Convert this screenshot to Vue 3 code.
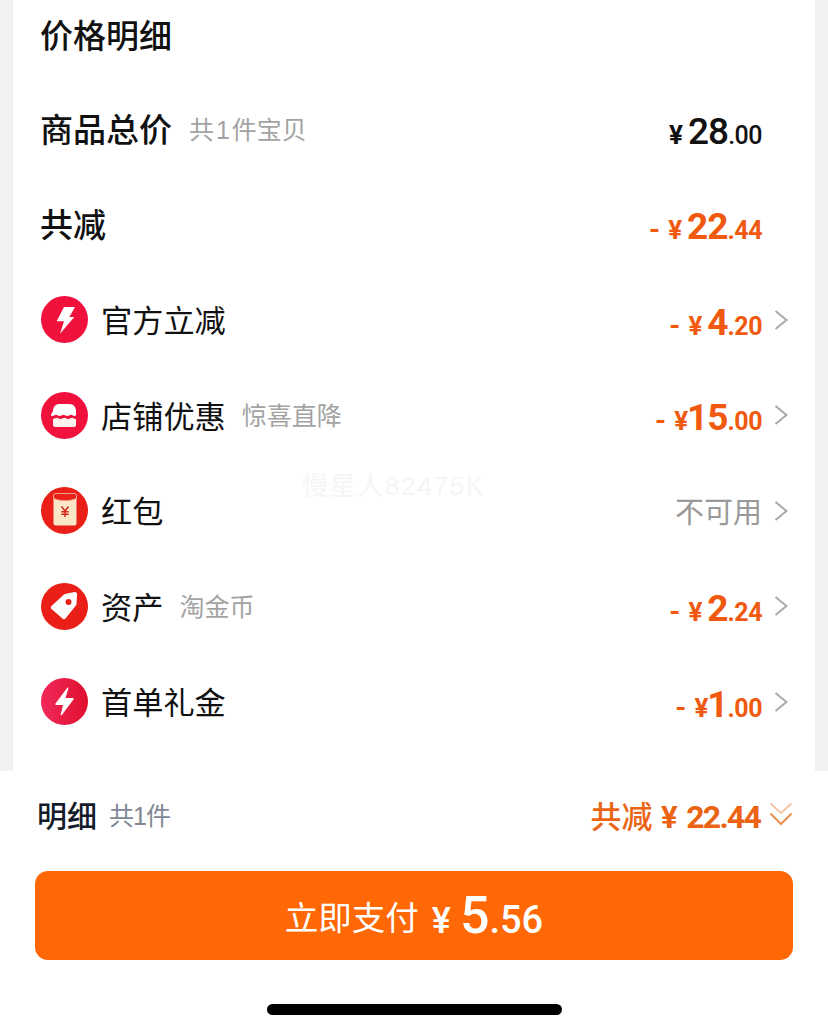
<template>
  <div class="page">
    <section class="card">
      <h2 class="title">价格明细</h2>

      <div class="row head">
        <span class="name strong">商品总价</span>
        <span class="sub sub-total">共 1 件宝贝</span>
        <span class="price dark"><i class="yen">¥</i><b>28</b><em>.00</em></span>
        <span class="chev-slot"></span>
      </div>
      <div class="row head">
        <span class="name strong">共减</span>
        <span class="price"><i class="minus">-</i><i class="yen">¥</i><b>22</b><em>.44</em></span>
        <span class="chev-slot"></span>
      </div>

      <div v-for="item in items" :key="item.name" class="row">
        <span class="badge" :class="item.icon">
          <svg v-if="item.icon === 'bolt'" viewBox="0 0 47 47" width="47" height="47">
            <path d="M23 11h11l-5.700 10h5L19 37.700 23 25.300h-7.300z" fill="#fff" />
          </svg>
          <svg v-else-if="item.icon === 'shop'" viewBox="0 0 47 47" width="47" height="47">
            <path d="M12 19c0-4 2.500-7 6.500-7h10c4 0 6.500 3 6.500 7v3.500c0 1-.5 1.500-1.500 1.500-1.200 0-2-1.300-3.500-1.300s-2.300 1.300-3.700 1.300-2.300-1.300-3.800-1.300-2.300 1.300-3.800 1.300-2.200-1.300-3.700-1.300-2.300 1.300-3.500 1.300c-1 0-1.500-.5-1.500-1.500z" fill="#fff" />
            <path d="M12 27c1.200 0 2.300-1.300 3.700-1.300s2.300 1.300 3.800 1.300 2.300-1.300 3.900-1.300 2.300 1.300 3.800 1.300 2.300-1.300 3.800-1.300 2.200 1.300 4 1.300v6c0 1.300-.8 2-2 2H14c-1.200 0-2-.7-2-2z" fill="#fdf3ee" />
          </svg>
          <svg v-else-if="item.icon === 'packet'" viewBox="0 0 47 47" width="47" height="47">
            <rect x="12.500" y="6.500" width="23" height="32" rx="2" fill="#fbe6c8" />
            <path d="M12.500 8.500a2 2 0 0 1 2-2h19a2 2 0 0 1 2 2v2.800c-3.500 1.800-7.500 2.500-11.500 2.500s-8-.7-11.500-2.500z" fill="#e8231a" stroke="#f6b8a0" stroke-width=".8" />
            <path d="M20.500 19.500l3.500 4.500 3.500-4.500M24 24v6M20.300 24.800h7.400M20.300 27.300h7.400" fill="none" stroke="#d32a1e" stroke-width="1.500" />
          </svg>
          <svg v-else-if="item.icon === 'tag'" viewBox="0 0 47 47" width="47" height="47">
            <path d="M24 11l9.500-2c1.500-.3 2.700 1 2.600 2.500L35.500 21c-.1.700-.3 1.200-.8 1.700L24.500 35.500c-.9.900-2.200.900-3.100 0L10.500 26c-.9-.9-.9-2.200 0-3.100L22.700 11.800c.4-.4.800-.7 1.300-.8z" fill="#fff" />
            <circle cx="27.500" cy="19" r="3" fill="#ea1f18" />
          </svg>
          <svg v-else viewBox="0 0 47 47" width="47" height="47">
            <path d="M26.500 9.500c.6-.3 1.100.2.900.8L24.500 20h7.300c.8 0 1.200.9.700 1.500L20.800 37c-.5.600-1.300.2-1.100-.6L22 27h-6.800c-.8 0-1.200-.9-.7-1.500z" fill="#fff" />
          </svg>
        </span>
        <span class="name">{{ item.name }}</span>
        <span v-if="item.sub" class="sub">{{ item.sub }}</span>
        <span v-if="item.text" class="off">{{ item.text }}</span>
        <span v-else class="price small" :class="{ tight: item.whole[0] === '1' }"><i class="minus">-</i><i class="yen">¥</i><b>{{ item.whole }}</b><em>{{ item.cents }}</em></span>
        <svg class="chev" viewBox="0 0 14 20" width="14" height="20">
          <path d="M1.500 1L12.500 10L1.500 19" fill="none" stroke="#a9a9a9" stroke-width="2" />
        </svg>
      </div>

      <div class="mark">慢星人82475K</div>
    </section>

    <footer class="bottom">
      <div class="summary">
        <span class="sum-name">明细</span>
        <span class="sum-count">共1件</span>
        <span class="sum-off">共减 <i>¥</i> <b>22.44</b></span>
        <svg viewBox="0 0 24 24" width="24" height="24">
          <path d="M1.500 1.500L12 11L22.500 1.500" fill="none" stroke="#f2c4a4" stroke-width="2" />
          <path d="M1.500 11.500L12 22L22.500 11.500" fill="none" stroke="#ef8f4c" stroke-width="2" />
        </svg>
      </div>
      <button class="pay">
        <span class="pay-label">立即支付</span>
        <i>¥</i><b>5</b><em>.56</em>
      </button>
      <div class="home"></div>
    </footer>
  </div>
</template>

<script setup>
const items = [
  { icon: 'bolt', name: '官方立减', whole: '4', cents: '.20' },
  { icon: 'shop', name: '店铺优惠', sub: '惊喜直降', whole: '15', cents: '.00' },
  { icon: 'packet', name: '红包', text: '不可用' },
  { icon: 'tag', name: '资产', sub: '淘金币', whole: '2', cents: '.24' },
  { icon: 'flash', name: '首单礼金', whole: '1', cents: '.00' },
]
</script>

<style>
html, body { background: #fff; }
</style>

<style scoped>
.page {
  width: 828px; height: 1032px; overflow: hidden;
  display: flex; flex-direction: column;
  background: #f2f2f2;
  font-family: "Liberation Sans", "Noto Sans CJK SC", sans-serif;
  color: #111;
}
.card {
  position: relative;
  flex: 1; margin: 0 13px; padding: 0 27px;
  background: #fff;
}
.title {
  height: 82px; margin: 0; padding-bottom: 14px; box-sizing: border-box;
  display: flex; align-items: center;
  font-size: 33px; font-weight: 500;
}
.row { height: 95.5px; display: flex; align-items: center; }
.name { font-size: 31.200px; padding-bottom: 4px; }
.name.strong { font-size: 33px; font-weight: 500; }
.sub { margin-left: 16px; font-size: 25px; color: #a3a3a3; padding-bottom: 4px; }
.sub-total { margin-left: 17px; word-spacing: -5px; }
.badge {
  width: 47px; height: 47px; margin: 0 13px 2px 1px; flex: none;
  border-radius: 50%; display: block;
}
.badge svg { display: block; }
.bolt, .shop { background: #f0113d; }
.packet, .tag { background: #ea1f18; }
.flash { background: linear-gradient(90deg, #f0285a, #e0102e); }

.price, .off { margin-left: auto; }
.off { font-size: 29px; color: #999; padding-bottom: 4px; }
.price {
  display: flex; align-items: baseline; margin-top: 3px;
  font-family: Roboto, "Liberation Sans", sans-serif;
  color: #f0590f;
}
.price.dark { color: #111; }
.price i { font-style: normal; font-weight: 700; }
.price .yen { font-size: 26px; margin-right: 5px; }
.price .minus { font-size: 28px; margin-right: 8px; }
.price b { font-size: 37px; font-weight: 700; letter-spacing: -1px; }
.price.tight b { margin-left: -6px; }
.price em { font-style: normal; font-size: 25px; font-weight: 700; letter-spacing: -.5px; }
.price.dark b, .price.dark em { font-weight: 500; }
.chev-slot { width: 26px; flex: none; }
.chev { width: 14px; margin: -2px 0 0 12px; flex: none; }

.mark {
  position: absolute; left: 289px; top: 465px;
  font-size: 26px; letter-spacing: 1.700px; color: #f5f5f5;
}

.bottom {
  height: 261px; flex: none; padding: 0 35px; box-sizing: border-box;
  display: flex; flex-direction: column;
  background: #fff;
}
.summary { height: 100px; padding-bottom: 14px; box-sizing: border-box; display: flex; align-items: center; }
.sum-name { font-size: 30px; font-weight: 500; color: #141c2b; margin-left: 2px; }
.sum-count { margin-left: 12px; font-size: 25px; color: #7f8894; letter-spacing: -1px; }
.sum-off { margin-left: auto; font-size: 31px; font-weight: 500; color: #ea6413; white-space: nowrap; }
.sum-off i { font-style: normal; font-weight: 700; font-family: Roboto, sans-serif; }
.sum-off b { font-family: Roboto, sans-serif; font-weight: 700; font-size: 32px; letter-spacing: -1.800px; }
.summary svg { margin-left: 9px; }

.pay {
  height: 89px; border: 0; padding: 0; border-radius: 13px; flex: none;
  display: block; text-align: center; line-height: 89px;
  background: #ff6804; color: #fff;
  font-family: Roboto, "Noto Sans CJK SC", sans-serif;
}
.pay-label { font-size: 33.500px; margin-right: 13px; vertical-align: 3px; font-family: "Noto Sans CJK SC", sans-serif; }
.pay i { font-style: normal; font-size: 36px; font-weight: 500; margin-right: 9px; }
.pay b { font-size: 52px; font-weight: 500; }
.pay em { font-style: normal; font-size: 38px; font-weight: 500; }
.home {
  width: 295px; height: 11px; margin: 44px auto 0; flex: none;
  border-radius: 6px; background: #000;
}
</style>
